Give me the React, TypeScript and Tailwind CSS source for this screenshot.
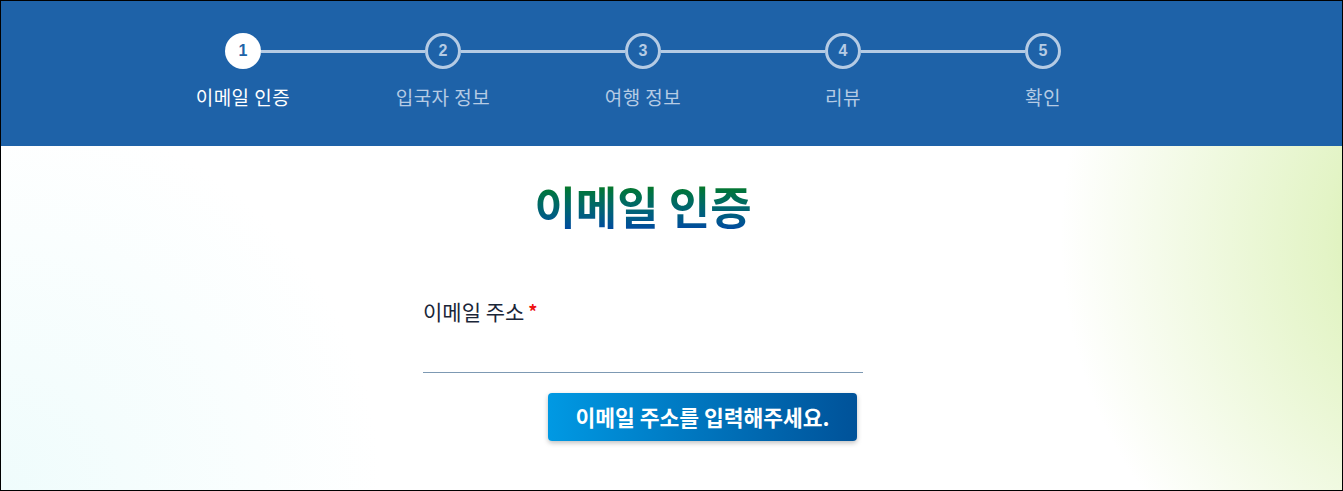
import React from "react";

const steps = ["이메일 인증", "입국자 정보", "여행 정보", "리뷰", "확인"];

const Stepper = ({ current }: { current: number }) => {
  return (
    <div className="pt-[32px] h-[145px]">
      {/* circles + connector lines */}
      <div className="flex items-center w-[836px] ml-[224px]">
        {steps.map((_, i) => (
          <React.Fragment key={i}>
            {i === current ? (
              <div className="w-[36px] h-[36px] rounded-full bg-white flex items-center justify-center text-[16px] font-bold text-[#1e63a8] font-['Liberation_Sans',sans-serif]">
                {i + 1}
              </div>
            ) : (
              <div className="w-[36px] h-[36px] rounded-full border-[3px] border-[#b5cbe4] flex items-center justify-center text-[16px] font-bold text-[#b5cbe4] font-['Liberation_Sans',sans-serif]">
                {i + 1}
              </div>
            )}
            {i < steps.length - 1 && <div className="flex-1 h-[3px] bg-[#b5cbe4]"></div>}
          </React.Fragment>
        ))}
      </div>
      {/* labels */}
      <div className="flex ml-[142px] mt-[15px]">
        {steps.map((label, i) => (
          <div
            key={label}
            className={`w-[200px] text-center text-[19px] tracking-[0.5px] leading-[26px] ${
              i === current ? "text-white" : "text-[#b5cbe4]"
            }`}
          >
            {label}
          </div>
        ))}
      </div>
    </div>
  );
};

export default function App() {
  return (
    <div className="w-[1343px] h-[491px] border border-black overflow-hidden font-['Noto_Sans_CJK_KR','Noto_Sans',sans-serif]">
      <header className="bg-[#1e62a8]">
        <Stepper current={0} />
      </header>

      <main className="h-[344px] bg-[radial-gradient(circle_440px_at_1500px_90px,#c9e893_0%,#e3f4c6_40%,#ffffff00_100%),radial-gradient(circle_380px_at_0px_344px,#effcfc_0%,#ffffff00_100%)]">
        <div className="w-[1284px] flex flex-col items-center">
          <h1 className="mt-[37px] text-[45px] leading-[46px] font-bold bg-linear-to-b from-[#137a10] to-[#004a9f] bg-clip-text text-transparent">
            이메일 인증
          </h1>

          <div className="w-[440px] mt-[67px]">
            <label className="block text-[21px] leading-[30px] text-[#1a2638]">
              이메일 주소
              <span className="text-[#ee1111] text-[18px] font-bold align-top ml-[4px]">*</span>
            </label>
            <input
              type="email"
              className="w-full h-[46px] mt-[1px] bg-transparent border-b border-[#7d99b3] outline-none text-[18px]"
            />
            <div className="flex justify-end pr-[6px] mt-[20px]">
              <button className="w-[309px] h-[48px] rounded-[4px] bg-linear-to-r from-[#0099e3] to-[#005299] text-white text-[21.5px] font-bold shadow-[0_2px_5px_rgba(0,0,0,0.25)]">
                이메일 주소를 입력해주세요.
              </button>
            </div>
          </div>
        </div>
      </main>
    </div>
  );
}
